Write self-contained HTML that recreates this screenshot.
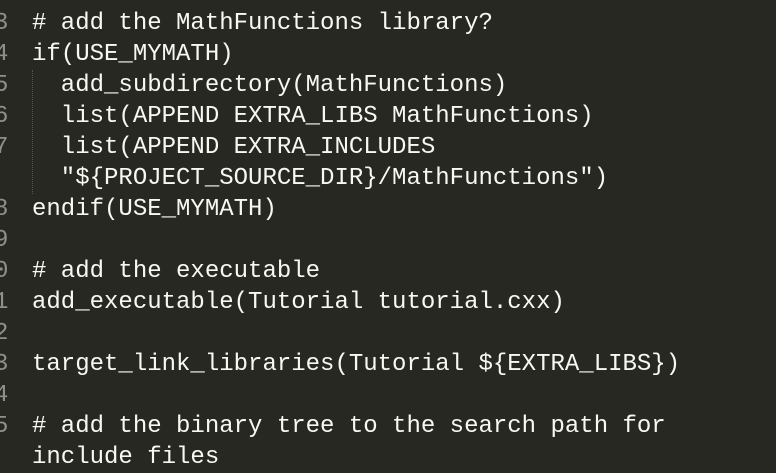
<!DOCTYPE html>
<html><head><meta charset="utf-8"><style>
html,body{margin:0;padding:0;background:#272822;width:776px;height:454px;overflow:hidden}
.w{position:absolute;left:0;top:8px;font-family:"Liberation Mono",monospace;font-size:24px;line-height:31px;color:#f8f8f2;white-space:pre}
.n{position:absolute;left:-6px;top:8px;font-family:"Liberation Mono",monospace;font-size:24px;line-height:31px;color:#8f908a;white-space:pre}
.c{position:absolute;left:32px}
.g{position:absolute;left:32px;top:70px;height:124px;border-left:1px dotted #555}
</style></head><body>
<div class="g"></div>
<div class="n">3
4
5
6
7

8
9
0
1
2
3
4
5</div>
<div class="w"><div class="c"># add the MathFunctions library?
if(USE_MYMATH)
  add_subdirectory(MathFunctions)
  list(APPEND EXTRA_LIBS MathFunctions)
  list(APPEND EXTRA_INCLUDES
  "${PROJECT_SOURCE_DIR}/MathFunctions")
endif(USE_MYMATH)

# add the executable
add_executable(Tutorial tutorial.cxx)

target_link_libraries(Tutorial ${EXTRA_LIBS})

# add the binary tree to the search path for
include files</div></div>
</body></html>
